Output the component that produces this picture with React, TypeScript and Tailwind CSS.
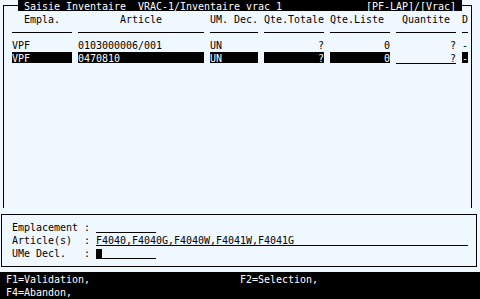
import React from 'react';

const cols = 'grid grid-cols-[60px_126px_48px_60px_60px_60px_6px] gap-x-[6px]';

const Dash = () => (
  <div className="pt-[6px]">
    <div className="h-px bg-black" />
  </div>
);

const FieldRow: React.FC<{ label: string; children: React.ReactNode }> = ({ label, children }) => (
  <div className="flex h-[13px]">
    <span className="w-[72px] whitespace-pre">{label}</span>
    <span className="w-[6px]">:</span>
    <div className="ml-[6px] flex">{children}</div>
  </div>
);

export default function App() {
  return (
    <div className="w-[480px] h-[299px] overflow-hidden bg-[#f0f8ff] text-black font-['DejaVu_Sans_Mono',monospace] text-[10px] leading-[13px] tracking-[-0.02px] whitespace-pre">
      {/* Upper frame */}
      <div className="relative mt-[5px] ml-[3px] w-[469px] h-[203px] border-x border-t border-black pt-[7px] pl-[8px]">
        <div className="absolute left-[14px] -top-[6px] w-[444px] h-[11px] bg-black text-white flex justify-between px-[6px]">
          <span>Saisie Inventaire  VRAC-1/Inventaire vrac 1</span>
          <span>[PF-LAP]/[Vrac]</span>
        </div>

        <div className={`${cols} h-[13px]`}>
          <span className="text-center">Empla.</span>
          <span className="text-center">Article</span>
          <span>UM. Dec.</span>
          <span>Qte.Totale</span>
          <span>Qte.Liste</span>
          <span className="text-center">Quantite</span>
          <span>D</span>
        </div>

        <div className={`${cols} h-[13px]`}>
          <Dash /><Dash /><Dash /><Dash /><Dash /><Dash /><Dash />
        </div>

        <div className={`${cols} h-[13px]`}>
          <span>VPF</span>
          <span>0103000006/001</span>
          <span>UN</span>
          <span className="text-right">?</span>
          <span className="text-right">0</span>
          <span className="text-right">?</span>
          <span>-</span>
        </div>

        <div className={`${cols} h-[13px]`}>
          <span className="h-[11px] bg-black text-white">VPF</span>
          <span className="h-[11px] bg-black text-white">0470810</span>
          <span className="h-[11px] bg-black text-white">UN</span>
          <span className="h-[11px] bg-black text-white text-right">?</span>
          <span className="h-[11px] bg-black text-white text-right">0</span>
          <span className="h-[12px] border-b border-black text-right">?</span>
          <span className="h-[11px] bg-black text-white">-</span>
        </div>
      </div>

      {/* Entry box */}
      <div className="mt-[6px] ml-[1px] w-[476px] h-[53px] border border-black pt-[6px] pl-[10px]">
        <FieldRow label="Emplacement">
          <div className="w-[60px] h-[12px] border-b border-black" />
        </FieldRow>
        <FieldRow label="Article(s)">
          <div className="w-[372px] h-[12px] border-b border-black">F4040,F4040G,F4040W,F4041W,F4041G</div>
        </FieldRow>
        <FieldRow label="UMe Decl.">
          <div className="mt-[2px] w-[6px] h-[10px] bg-black" />
          <div className="w-[54px] h-[12px] border-b border-black" />
        </FieldRow>
      </div>

      {/* Function keys */}
      <div className="mt-[5px] h-[27px] bg-black text-white pt-[1px] pl-[6px] grid grid-cols-[234px_1fr]">
        <span>F1=Validation,</span>
        <span>F2=Selection,</span>
        <span>F4=Abandon,</span>
        <span />
      </div>
    </div>
  );
}
